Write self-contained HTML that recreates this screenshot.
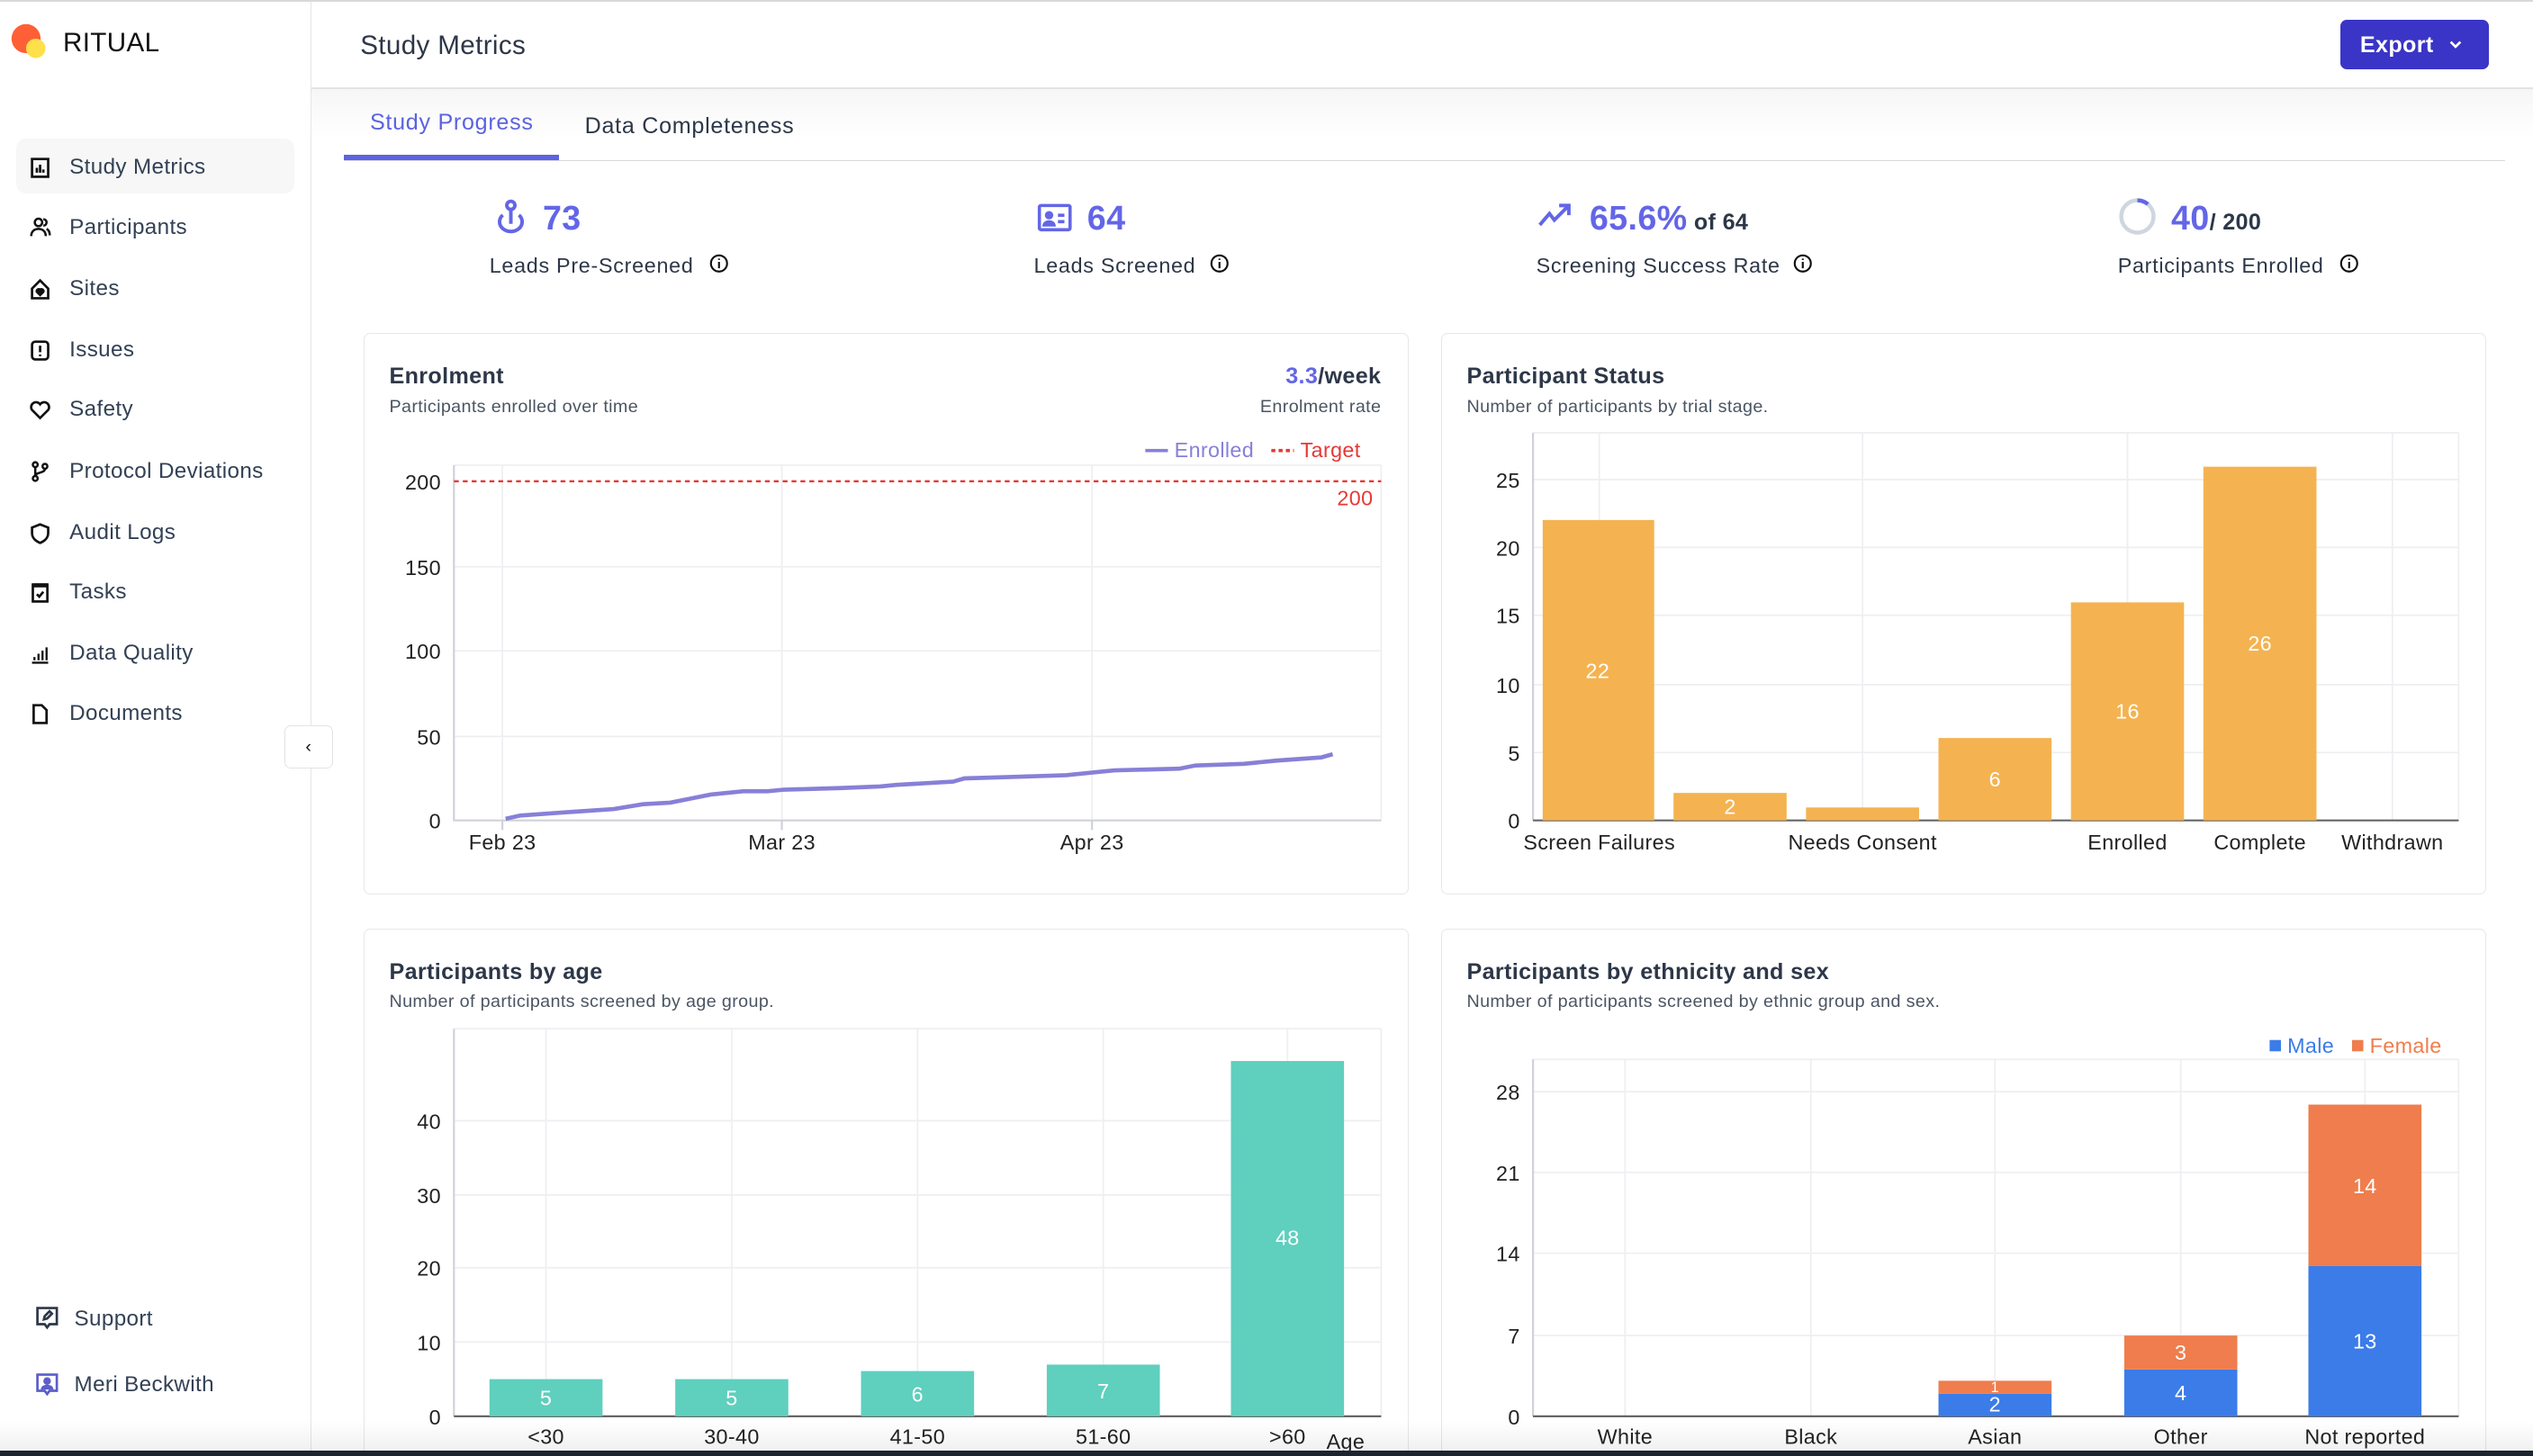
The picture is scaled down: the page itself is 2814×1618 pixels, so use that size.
<!DOCTYPE html>
<html><head><meta charset="utf-8">
<style>
html,body{margin:0;padding:0;background:#fff;overflow:hidden}
body{width:2814px;height:1618px}
#root{position:relative;width:1568px;height:902px;zoom:1.7946;font-family:"Liberation Sans",Arial,sans-serif;color:#2d3748;background:#fff;overflow:hidden;letter-spacing:0.2px}
.a{position:absolute;white-space:nowrap}
.nav{position:absolute;left:10px;width:172px;height:34px;font-size:13.5px;color:#334155}
.nav svg{position:absolute;left:8px;top:11px}
.nav span{position:absolute;left:33px;top:10px}
.card{position:absolute;border:1px solid #e5e7eb;border-radius:4px;background:#fff}
.ct{font-size:14px;font-weight:bold;color:#2d3748}
.cs{font-size:11px;color:#4b5563}
.big{font-size:21px;font-weight:bold;color:#6366e6}
.lab{font-size:13px;color:#2d3748;letter-spacing:0.4px}
</style></head><body><div id="root">
<div class="a" style="left:0;top:0;width:1568px;height:1px;background:#d9d9d9"></div>
<!-- sidebar -->
<div class="a" style="left:192px;top:1px;width:1px;height:901px;background:#e6e6e6"></div>
<svg class="a" style="left:6px;top:14px" width="26" height="26"><circle cx="10" cy="10" r="9" fill="#ff5f36"/><circle cx="16" cy="16" r="6" fill="#ffdf4a"/></svg>
<div class="a" style="left:39px;top:17px;font-size:16.5px;color:#111">RITUAL</div>

<div class="nav" style="top:86px;background:#f7f7f7;border-radius:6px"><svg width="14" height="14" viewBox="0 0 14 14" fill="none" stroke="#111" stroke-width="1.5"><rect x="2" y="1.5" width="10" height="11"/><path d="M5 10V7M7 10V5M9 10V8"/></svg><span>Study Metrics</span></div>
<div class="nav" style="top:123px"><svg width="14" height="14" viewBox="0 0 14 14" fill="none" stroke="#111" stroke-width="1.4"><circle cx="6" cy="4" r="2.3"/><path d="M1.5 12.5c0-3 2-4.5 4.5-4.5s4.5 1.5 4.5 4.5M9 2a2 2 0 010 4M11 8c1.2.6 2 2 2 4"/></svg><span>Participants</span></div>
<div class="nav" style="top:161px"><svg width="14" height="14" viewBox="0 0 14 14" fill="none" stroke="#111" stroke-width="1.5"><path d="M2 6.5L7 1.5l5 5V12.5H2z"/><path d="M7 10.5l-2-2a1.2 1.2 0 012-1.2 1.2 1.2 0 012 1.2z" fill="#111"/></svg><span>Sites</span></div>
<div class="nav" style="top:199px"><svg width="14" height="14" viewBox="0 0 14 14" fill="none" stroke="#111" stroke-width="1.5"><rect x="2" y="1.5" width="10" height="11" rx="2"/><path d="M7 4v4M7 9.5v1"/></svg><span>Issues</span></div>
<div class="nav" style="top:236px"><svg width="14" height="14" viewBox="0 0 14 14" fill="none" stroke="#111" stroke-width="1.5"><path d="M7 12L2 7a2.7 2.7 0 015-3.5A2.7 2.7 0 0112 7z"/></svg><span>Safety</span></div>
<div class="nav" style="top:274px"><svg width="14" height="14" viewBox="0 0 14 14" fill="none" stroke="#111" stroke-width="1.4"><circle cx="4" cy="3" r="1.5"/><circle cx="4" cy="11.5" r="1.5"/><circle cx="10" cy="4" r="1.5"/><path d="M4 4.5v5.5M10 5.5c0 3-6 2-6 4.5"/></svg><span>Protocol Deviations</span></div>
<div class="nav" style="top:312px"><svg width="14" height="14" viewBox="0 0 14 14" fill="none" stroke="#111" stroke-width="1.5"><path d="M7 1.5l5 2v3.5c0 3-2.5 5-5 6-2.5-1-5-3-5-6V3.5z"/></svg><span>Audit Logs</span></div>
<div class="nav" style="top:349px"><svg width="14" height="14" viewBox="0 0 14 14" fill="none" stroke="#111" stroke-width="1.5"><rect x="2.5" y="2" width="9" height="10.5"/><path d="M2.5 2.5h9" stroke-width="2.5"/><path d="M5 8l1.5 1.5L9 6.5"/></svg><span>Tasks</span></div>
<div class="nav" style="top:387px"><svg width="14" height="14" viewBox="0 0 14 14" fill="none" stroke="#111" stroke-width="1.3"><path d="M2 12.5h10M3.5 11V9M6 11V7M8.5 11V5M11 11V3"/></svg><span>Data Quality</span></div>
<div class="nav" style="top:424px"><svg width="14" height="14" viewBox="0 0 14 14" fill="none" stroke="#111" stroke-width="1.5"><path d="M3 1.5h5l3 3v8H3z"/></svg><span>Documents</span></div>

<div class="a" style="left:176px;top:449px;width:29px;height:26px;border:1px solid #e3e3e3;border-radius:4px;background:#fff;font-size:11px;text-align:center;line-height:26px;color:#111">‹</div>

<svg class="a" style="left:21px;top:808px" width="16" height="16" viewBox="0 0 16 16" fill="none" stroke="#2d3748" stroke-width="1.5"><path d="M2 2h12v10H9.5L8 14l-1.5-2H2z"/><path d="M6 9l.5-2 3-3 1.5 1.5-3 3z"/></svg>
<div class="a" style="left:46px;top:809px;font-size:13.5px;color:#334155">Support</div>
<svg class="a" style="left:21px;top:849px" width="16" height="16" viewBox="0 0 16 16" fill="none" stroke="#5b5fc7" stroke-width="1.5"><path d="M2 2h12v10H9.5L8 14l-1.5-2H2z"/><circle cx="8" cy="6" r="1.6" fill="#5b5fc7"/><path d="M5 10.5c.5-2 5.5-2 6 0z" fill="#5b5fc7"/></svg>
<div class="a" style="left:46px;top:850px;font-size:13.5px;color:#334155">Meri Beckwith</div>

<!-- header -->
<div class="a" style="left:223px;top:19px;font-size:16.5px;color:#2d3748">Study Metrics</div>
<div class="a" style="left:193px;top:54px;width:1375px;height:1px;background:#e3e3e3"></div>
<div class="a" style="left:193px;top:55px;width:1375px;height:30px;background:linear-gradient(#f6f6f6,#fff)"></div>
<div class="a" style="left:1449px;top:12px;width:92px;height:31px;background:#3a35c6;border-radius:4px;color:#fff;font-size:14px;font-weight:bold"><span style="position:absolute;left:12px;top:8px">Export</span><svg style="position:absolute;left:66px;top:12px" width="10" height="8"><path d="M2 2l3 3 3-3" stroke="#fff" stroke-width="1.5" fill="none"/></svg></div>

<!-- tabs -->
<div class="a" style="left:229px;top:68px;font-size:14px;color:#5b63e0;letter-spacing:0.4px">Study Progress</div>
<div class="a" style="left:362px;top:70px;font-size:14px;color:#2d3748;letter-spacing:0.4px">Data Completeness</div>
<div class="a" style="left:213px;top:99px;width:1338px;height:1px;background:#d8d8d8"></div>
<div class="a" style="left:213px;top:96px;width:133px;height:3px;background:#5b63e0"></div>

<!-- stats -->
<svg class="a" style="left:304px;top:123px" width="24" height="24" viewBox="0 0 24 24" fill="none" stroke="#6366e6" stroke-width="2.2"><circle cx="12" cy="4" r="2.5"/><path d="M12 6.5v9M7 10a7 6 0 1010 0"/></svg>
<div class="a big" style="left:336px;top:123px">73</div>
<div class="a lab" style="left:303px;top:157px">Leads Pre-Screened</div>
<svg class="a" style="left:439px;top:157px" width="12" height="12" viewBox="0 0 12 12" fill="none" stroke="#111" stroke-width="1.2"><circle cx="6" cy="6" r="5"/><path d="M6 5v4M6 3v.8"/></svg>

<svg class="a" style="left:642px;top:124px" width="22" height="22" viewBox="0 0 22 22" fill="none" stroke="#6366e6" stroke-width="2"><rect x="1.5" y="3" width="19" height="15" rx="1"/><circle cx="7.5" cy="9" r="1.6" fill="#6366e6"/><path d="M4.5 15c.5-2.5 5.5-2.5 6 0z" fill="#6366e6"/><path d="M13 9h4M13 13h4"/></svg>
<div class="a big" style="left:673px;top:123px">64</div>
<div class="a lab" style="left:640px;top:157px">Leads Screened</div>
<svg class="a" style="left:749px;top:157px" width="12" height="12" viewBox="0 0 12 12" fill="none" stroke="#111" stroke-width="1.2"><circle cx="6" cy="6" r="5"/><path d="M6 5v4M6 3v.8"/></svg>

<svg class="a" style="left:951px;top:124px" width="24" height="18" viewBox="0 0 24 18" fill="none" stroke="#6366e6" stroke-width="2.2"><path d="M2 15l6-7 3 4 9-9M14 3h6v6"/></svg>
<div class="a big" style="left:984px;top:123px">65.6%<span style="font-size:14px;color:#2d3748;font-weight:bold"> of 64</span></div>
<div class="a lab" style="left:951px;top:157px">Screening Success Rate</div>
<svg class="a" style="left:1110px;top:157px" width="12" height="12" viewBox="0 0 12 12" fill="none" stroke="#111" stroke-width="1.2"><circle cx="6" cy="6" r="5"/><path d="M6 5v4M6 3v.8"/></svg>

<svg class="a" style="left:1311px;top:122px" width="24" height="24" viewBox="0 0 24 24" fill="none" stroke-width="2.5"><circle cx="12" cy="12" r="10" stroke="#cfd6e0"/><path d="M12 2a10 10 0 016.5 2.4" stroke="#6366e6"/></svg>
<div class="a big" style="left:1344px;top:123px">40<span style="font-size:14px;color:#2d3748;font-weight:bold">/ 200</span></div>
<div class="a lab" style="left:1311px;top:157px">Participants Enrolled</div>
<svg class="a" style="left:1448px;top:157px" width="12" height="12" viewBox="0 0 12 12" fill="none" stroke="#111" stroke-width="1.2"><circle cx="6" cy="6" r="5"/><path d="M6 5v4M6 3v.8"/></svg>

<!-- cards -->
<div class="card" style="left:225px;top:206px;width:646px;height:347px"></div>
<div class="card" style="left:892px;top:206px;width:646px;height:347px"></div>
<div class="card" style="left:225px;top:575px;width:646px;height:340px"></div>
<div class="card" style="left:892px;top:575px;width:646px;height:340px"></div>

<div class="a ct" style="left:241px;top:225px">Enrolment</div>
<div class="a cs" style="left:241px;top:246px">Participants enrolled over time</div>
<div class="a ct" style="right:713px;top:225px"><span style="color:#6366e6">3.3</span>/week</div>
<div class="a cs" style="right:713px;top:246px">Enrolment rate</div>
<div class="a ct" style="left:908px;top:225px">Participant Status</div>
<div class="a cs" style="left:908px;top:246px">Number of participants by trial stage.</div>
<div class="a ct" style="left:241px;top:594px">Participants by age</div>
<div class="a cs" style="left:241px;top:614px">Number of participants screened by age group.</div>
<div class="a ct" style="left:908px;top:594px">Participants by ethnicity and sex</div>
<div class="a cs" style="left:908px;top:614px">Number of participants screened by ethnic group and sex.</div>

<svg class="a" style="left:0;top:0" width="1568" height="902" font-family="Liberation Sans, Arial, sans-serif">
<g stroke="#efeff3" stroke-width="1" fill="none">
<path d="M281 288H855M281 351H855M281 403H855M281 456H855M311 288V508M484 288V508M676 288V508M855 288V508"/>
<path d="M949 268H1522M949 297H1522M949 339H1522M949 381H1522M949 424H1522M949 466H1522M990 268V508M1153 268V508M1317 268V508M1481 268V508M1522 268V508"/>
<path d="M281 637H855M281 694H855M281 740H855M281 785H855M281 831H855M338 637V877M453 637V877M568 637V877M683 637V877M797 637V877M855 637V877"/>
<path d="M949 656H1522M949 676H1522M949 726H1522M949 776H1522M949 827H1522M1006 656V877M1121 656V877M1235 656V877M1350 656V877M1464 656V877M1522 656V877"/>
</g>
<g stroke="#cfd2d8" stroke-width="1.2" fill="none">
<path d="M281 288V508H855M311 508v6M484 508v6M676 508v6"/>
<path d="M949 268V508"/>
<path d="M281 637V877"/>
<path d="M949 656V877"/>
</g>
<g stroke="#666" stroke-width="1.2" fill="none"><path d="M949 508H1522M281 877H855M949 877H1522"/></g>
<!-- enrolment -->
<path d="M281 298H855" stroke="#e53935" stroke-width="1.3" stroke-dasharray="3 2.5" fill="none"/>
<text x="850" y="313" font-size="13" fill="#e53935" text-anchor="end">200</text>
<path d="M313 507L322 505L350 503L380 501L398 498L415 497L440 492L460 490L475 490L485 489L520 488L545 487L555 486L590 484L597 482L630 481L660 480L680 478L690 477L730 476L740 474L770 473L790 471L818 469L825 467" stroke="#8780d8" stroke-width="2.6" fill="none"/>
<path d="M709 279h14" stroke="#8780d8" stroke-width="2"/><text x="727" y="283" font-size="13" fill="#8780d8">Enrolled</text>
<path d="M787 279h14" stroke="#e53935" stroke-width="2" stroke-dasharray="2.5 2"/><text x="805" y="283" font-size="13" fill="#e53935">Target</text>
<g font-size="13" fill="#222" text-anchor="end"><text x="273" y="303">200</text><text x="273" y="356">150</text><text x="273" y="408">100</text><text x="273" y="461">50</text><text x="273" y="513">0</text></g>
<g font-size="13" fill="#222" text-anchor="middle"><text x="311" y="526">Feb 23</text><text x="484" y="526">Mar 23</text><text x="676" y="526">Apr 23</text></g>
<!-- status -->
<g fill="#f4b350"><rect x="955" y="322" width="69" height="186"/><rect x="1036" y="491" width="70" height="17"/><rect x="1118" y="500" width="70" height="8"/><rect x="1200" y="457" width="70" height="51"/><rect x="1282" y="373" width="70" height="135"/><rect x="1364" y="289" width="70" height="219"/></g>
<g font-size="13" fill="#fff" text-anchor="middle"><text x="989" y="420">22</text><text x="1071" y="504">2</text><text x="1235" y="487">6</text><text x="1317" y="445">16</text><text x="1399" y="403">26</text></g>
<g font-size="13" fill="#222" text-anchor="end"><text x="941" y="302">25</text><text x="941" y="344">20</text><text x="941" y="386">15</text><text x="941" y="429">10</text><text x="941" y="471">5</text><text x="941" y="513">0</text></g>
<g font-size="13" fill="#222" text-anchor="middle"><text x="990" y="526">Screen Failures</text><text x="1153" y="526">Needs Consent</text><text x="1317" y="526">Enrolled</text><text x="1399" y="526">Complete</text><text x="1481" y="526">Withdrawn</text></g>
<!-- age -->
<g fill="#5fcfbe"><rect x="303" y="854" width="70" height="23"/><rect x="418" y="854" width="70" height="23"/><rect x="533" y="849" width="70" height="28"/><rect x="648" y="845" width="70" height="32"/><rect x="762" y="657" width="70" height="220"/></g>
<g font-size="13" fill="#fff" text-anchor="middle"><text x="338" y="870">5</text><text x="453" y="870">5</text><text x="568" y="868">6</text><text x="683" y="866">7</text><text x="797" y="771">48</text></g>
<g font-size="13" fill="#222" text-anchor="end"><text x="273" y="699">40</text><text x="273" y="745">30</text><text x="273" y="790">20</text><text x="273" y="836">10</text><text x="273" y="882">0</text></g>
<g font-size="13" fill="#222" text-anchor="middle"><text x="338" y="894">&lt;30</text><text x="453" y="894">30-40</text><text x="568" y="894">41-50</text><text x="683" y="894">51-60</text><text x="797" y="894">&gt;60</text><text x="833" y="897">Age</text></g>
<!-- ethnicity -->
<g fill="#3b7ce8"><rect x="1200" y="863" width="70" height="14"/><rect x="1315" y="848" width="70" height="29"/><rect x="1429" y="784" width="70" height="93"/></g>
<g fill="#ef7d4d"><rect x="1200" y="855" width="70" height="8"/><rect x="1315" y="827" width="70" height="21"/><rect x="1429" y="684" width="70" height="100"/></g>
<g font-size="13" fill="#fff" text-anchor="middle"><text x="1235" y="874">2</text><text x="1235" y="862" font-size="9">1</text><text x="1350" y="867">4</text><text x="1350" y="842">3</text><text x="1464" y="835">13</text><text x="1464" y="739">14</text></g>
<g font-size="13" fill="#222" text-anchor="end"><text x="941" y="681">28</text><text x="941" y="731">21</text><text x="941" y="781">14</text><text x="941" y="832">7</text><text x="941" y="882">0</text></g>
<g font-size="13" fill="#222" text-anchor="middle"><text x="1006" y="894">White</text><text x="1121" y="894">Black</text><text x="1235" y="894">Asian</text><text x="1350" y="894">Other</text><text x="1464" y="894">Not reported</text></g>
<rect x="1405" y="644" width="7" height="7" fill="#3b7ce8"/><text x="1416" y="652" font-size="13" fill="#3b7ce8">Male</text>
<rect x="1456" y="644" width="7" height="7" fill="#ef7d4d"/><text x="1467" y="652" font-size="13" fill="#ef7d4d">Female</text>
</svg>
<div class="a" style="left:0;top:880px;width:1568px;height:18px;background:linear-gradient(rgba(0,0,0,0),rgba(0,0,0,0.06))"></div>
<div class="a" style="left:0;top:898px;width:1568px;height:4px;background:#1c2430"></div>
</div></body></html>
